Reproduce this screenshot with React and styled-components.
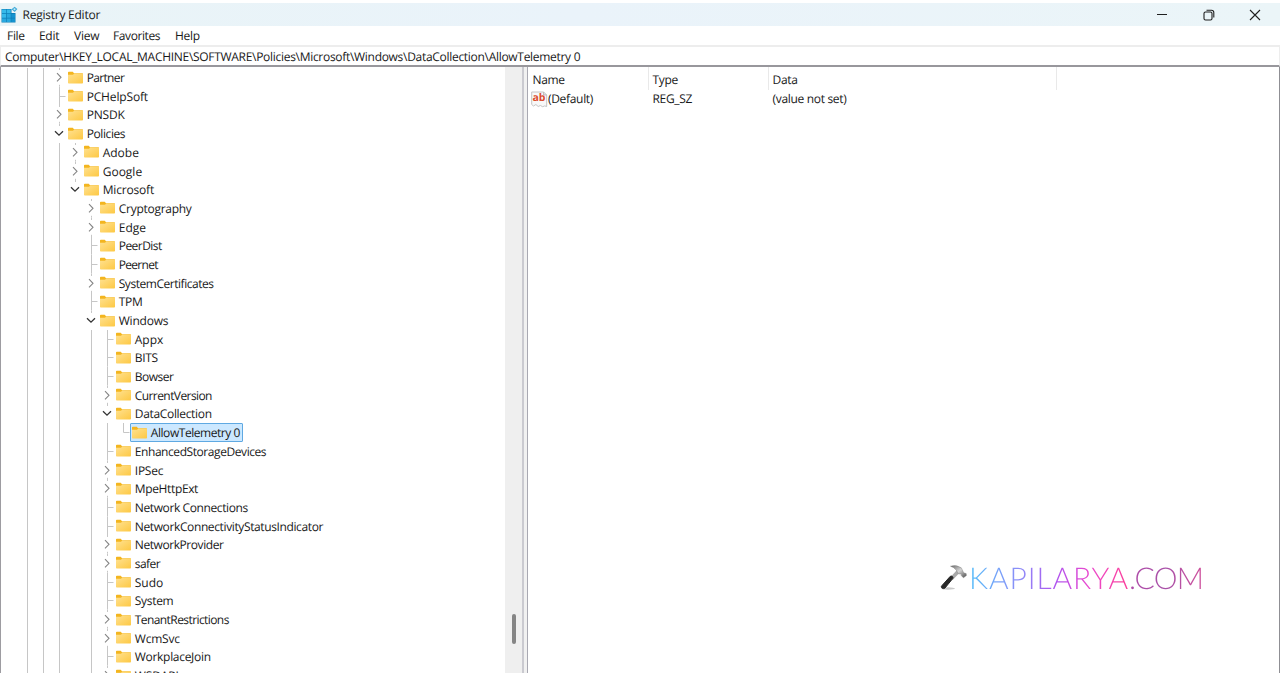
import styled, { createGlobalStyle } from 'styled-components';

const GlobalStyle = createGlobalStyle`
  * {
    box-sizing: border-box;
  }

  body {
    margin: 0;
    overflow: hidden;
    background: #ffffff;
    color: #181818;
    font-family: "Open Sans", "Noto Sans", sans-serif;
    font-size: 12px;
    text-rendering: geometricPrecision;
  }
`;

const Window = styled.div`
  display: flex;
  flex-direction: column;
  height: 673px;
  padding-top: 3px;
  overflow: hidden;
  position: relative;
`;

const TitleBar = styled.header`
  display: flex;
  align-items: center;
  flex: 0 0 23px;
  background: linear-gradient(90deg, #e9f4f7, #eaf3fa 45%, #ebf5f8);
`;

const AppIcon = styled.svg`
  width: 17px;
  height: 17px;
  margin: 0 4.5px 0 1px;
`;

const Title = styled.span`
  flex: 1;
  line-height: 23px;
  letter-spacing: ${(p) => p.$spacing || 0}px;
`;

const WindowButton = styled.button`
  display: flex;
  align-items: center;
  justify-content: center;
  width: 46.5px;
  height: 22px;
  padding: 0 3px 0 0;
  border: 0;
  background: none;
  color: #1f1f1f;
`;

const MenuBar = styled.nav`
  display: flex;
  flex: 0 0 19px;
  min-height: 0;
  padding-left: 7px;
  line-height: 20px;
`;

const MenuItem = styled.span`
  width: ${(p) => p.$width}px;
  white-space: nowrap;
  letter-spacing: ${(p) => p.$spacing || 0}px;
`;

const AddressBar = styled.div`
  flex: 0 0 22px;
  min-height: 0;
  padding-left: 4px;
  border: 1px solid #ededed;
  border-top-width: 2px;
  border-bottom: 2px solid #98979c;
  line-height: 20px;
  white-space: nowrap;
  letter-spacing: ${(p) => p.$spacing || 0}px;
`;

const Panes = styled.main`
  display: flex;
  flex: 1;
  min-height: 0;
`;

const TreePane = styled.section`
  display: flex;
  width: 524px;
  border-left: 1px solid #9d9ca1;
  border-right: 2px solid #cacad0;
`;

const Tree = styled.div`
  flex: 1;
  padding: 1.1px 0 0 18px;
  overflow: hidden;
`;

const TreeRow = styled.div`
  display: flex;
  align-items: stretch;
  height: 18.69px;
`;

const Cell = styled.div`
  display: flex;
  flex: 0 0 16.05px;
  align-items: center;
  justify-content: center;
`;

const Guide = styled(Cell)`
  &::before {
    content: '';
    width: 1px;
    height: 100%;
    background: ${(p) => (p.$blank ? 'transparent' : '#c6c6c6')};
  }
`;

const Branch = styled.svg`
  width: 16px;
  height: 18.69px;
  flex: none;
  overflow: visible;
`;

const Node = styled.div`
  display: flex;
  align-items: center;
  height: 19px;
  margin-left: -1px;
  padding: 0 2px 0 1px;
  border: 1px solid ${(p) => (p.$selected ? '#5fa9e2' : 'transparent')};
  border-radius: 1px;
  background: ${(p) => (p.$selected ? '#cce8ff' : 'transparent')};
`;

const FolderSvg = styled.svg`
  width: 16px;
  height: 14px;
  flex: none;
`;

const Label = styled.span`
  margin-left: 2.5px;
  line-height: 17px;
  white-space: nowrap;
  letter-spacing: ${(p) => p.$spacing || 0}px;
`;

const ScrollTrack = styled.div`
  width: 17px;
  padding: 547px 0 0 7px;
  background: #efefef;
`;

const ScrollThumb = styled.div`
  width: 4px;
  height: 30px;
  border-radius: 2px;
  background: #858585;
`;

const Splitter = styled.div`
  width: 3px;
  background: #f1f1f1;
`;

const ValuesPane = styled.section`
  flex: 1;
  border-left: 1px solid #a9a9b2;
  border-right: 1px solid #8f8f94;
`;

const ValueRow = styled.div`
  display: grid;
  grid-template-columns: 121px 120px 288px 1fr;
  height: ${(p) => (p.$header ? 21 : 20)}px;
  line-height: 20px;
`;

const ValueCell = styled.div`
  display: flex;
  align-items: center;
  padding: ${(p) => (p.$ruled ? 3 : 1)}px 0 0 3.5px;
  border-right: 1px solid ${(p) => (p.$ruled ? '#e9e9e9' : 'transparent')};
  white-space: nowrap;
  letter-spacing: -0.32px;

  &:first-child {
    padding-left: ${(p) => (p.$icon ? 3 : 4.5)}px;
  }
`;

const Watermark = styled.div`
  position: absolute;
  left: 939px;
  top: 561px;
  display: flex;
  align-items: center;
  height: 34px;
`;

const SiteName = styled.span`
  font-family: Lato, sans-serif;
  font-size: 30px;
  font-weight: 300;
  line-height: 34px;
  letter-spacing: ${(p) => p.$spacing}px;
  background: ${(p) => p.$gradient};
  -webkit-background-clip: text;
  background-clip: text;
  color: transparent;
`;

// depth counts the guide columns left of the expander
const KEYS = [
  { name: 'Partner', depth: 2, state: 'closed', spacing: -0.65 },
  { name: 'PCHelpSoft', depth: 2, spacing: -0.15 },
  { name: 'PNSDK', depth: 2, state: 'closed', spacing: -0.15 },
  { name: 'Policies', depth: 2, state: 'open', spacing: -0.4 },
  { name: 'Adobe', depth: 3, state: 'closed' },
  { name: 'Google', depth: 3, state: 'closed' },
  { name: 'Microsoft', depth: 3, state: 'open', spacing: -0.18 },
  { name: 'Cryptography', depth: 4, state: 'closed', spacing: -0.27 },
  { name: 'Edge', depth: 4, state: 'closed' },
  { name: 'PeerDist', depth: 4, spacing: -0.55 },
  { name: 'Peernet', depth: 4, spacing: -0.7 },
  { name: 'SystemCertificates', depth: 4, state: 'closed', spacing: -0.46 },
  { name: 'TPM', depth: 4, spacing: -0.3 },
  { name: 'Windows', depth: 4, state: 'open', spacing: -0.2 },
  { name: 'Appx', depth: 5 },
  { name: 'BITS', depth: 5, spacing: -0.3 },
  { name: 'Bowser', depth: 5, spacing: -0.5 },
  { name: 'CurrentVersion', depth: 5, state: 'closed', spacing: -0.58 },
  { name: 'DataCollection', depth: 5, state: 'open', spacing: -0.33 },
  { name: 'AllowTelemetry 0', depth: 6, selected: true, last: true, spacing: -0.45 },
  { name: 'EnhancedStorageDevices', depth: 5, spacing: -0.43 },
  { name: 'IPSec', depth: 5, state: 'closed', spacing: -0.25 },
  { name: 'MpeHttpExt', depth: 5, state: 'closed', spacing: -0.36 },
  { name: 'Network Connections', depth: 5, spacing: -0.39 },
  { name: 'NetworkConnectivityStatusIndicator', depth: 5, spacing: -0.38 },
  { name: 'NetworkProvider', depth: 5, state: 'closed', spacing: -0.43 },
  { name: 'safer', depth: 5, state: 'closed', spacing: -0.55 },
  { name: 'Sudo', depth: 5 },
  { name: 'System', depth: 5, spacing: -0.3 },
  { name: 'TenantRestrictions', depth: 5, state: 'closed', spacing: -0.58 },
  { name: 'WcmSvc', depth: 5, state: 'closed', spacing: -0.2 },
  { name: 'WorkplaceJoin', depth: 5, spacing: -0.3 },
  { name: 'WSDAPI', depth: 5, state: 'closed', spacing: -0.1 },
];

const MENU = [
  { name: 'File', width: 32, spacing: -0.3 },
  { name: 'Edit', width: 35, spacing: -0.3 },
  { name: 'View', width: 39, spacing: -0.2 },
  { name: 'Favorites', width: 62, spacing: -0.4 },
  { name: 'Help', width: 40, spacing: -0.3 },
];

function Folder() {
  return (
    <FolderSvg viewBox="0 0 16 14">
      <defs>
        <linearGradient id="folder" x1="0" y1="0" x2="1" y2="1">
          <stop offset="0" stopColor="#ffe190" />
          <stop offset="1" stopColor="#fdc843" />
        </linearGradient>
      </defs>
      <path d="M0 1.6Q0 .8.8.8H4.8l1.2 1.4h8.2q.8 0 .8.8v3H0z" fill="#f3b51f" />
      <path d="M0 3.8h5L6.3 2.6H15v9.2q0 .8-.8.8H.8q-.8 0-.8-.8z" fill="url(#folder)" />
    </FolderSvg>
  );
}

function Expander({ state, last }) {
  if (state === 'closed') {
    return (
      <Branch viewBox="0 0 16 18.69">
        <path d="M8.5 0v2M8.5 16.8v1.9" stroke="#c6c6c6" />
        <path d="M6 5.2l4 4.1-4 4.1" fill="none" stroke="#858585" strokeWidth="1.1" />
      </Branch>
    );
  }
  if (state === 'open') {
    return (
      <Branch viewBox="0 0 16 18.69">
        <path d="M8.5 0v2" stroke="#c6c6c6" />
        <path d="M4 7.2l4 4 4-4" fill="none" stroke="#333333" strokeWidth="1.3" />
      </Branch>
    );
  }
  return (
    <Branch viewBox="0 0 16 18.69">
      <path d={last ? 'M8.5 0v9.5h6' : 'M8.5 0v18.69M8.5 9.5h6'} fill="none" stroke="#c6c6c6" />
    </Branch>
  );
}

function RegistryIcon() {
  return (
    <AppIcon viewBox="0 0 17 17">
      <path d="M.5 3h10v4h4v9.5H.5z" fill="#0d7fb8" />
      <g fill="#35b9ea">
        <path d="M1 3.5h4v3.7H1zM5.7 3.5h4v3.7h-4zM1 8h4v3.7H1z" />
        <path d="M5.7 8h4v3.7h-4zM1 12.4h4V16H1zM5.7 12.4h4V16h-4z" fill="#28a8df" />
        <path d="M10.4 8H14v3.7h-3.6zM10.4 12.4H14V16h-3.6z" fill="#1593cf" />
      </g>
      <path d="M10.5 3.3L13.6.8 16.4 3l-2.7 3z" fill="#3fa9d8" />
      <circle cx="13.5" cy="3.3" r="1" fill="#c5ecfa" />
    </AppIcon>
  );
}

function StringIcon() {
  return (
    <svg width="17" height="17" viewBox="0 0 17 17">
      <path d="M.7 1h12l3 3v11.5l-2-.6-2 .8-2.3-1.2-2.2 1-2.3-2L2.5 15l-1.8-1.5z" fill="#f8f8f8" stroke="#c4c4c4" />
      <path d="M12.5 1v3h3" fill="#dedede" stroke="#b0b0b0" strokeWidth=".7" />
      <text x="1.5" y="10" fill="#dc4a2b" fontFamily="Open Sans, sans-serif" fontSize="10.5" fontWeight="700" letterSpacing="0">ab</text>
    </svg>
  );
}

function Hammer() {
  return (
    <svg width="30" height="32" viewBox="0 0 30 32">
      <defs>
        <linearGradient id="steel" x1="0" y1="0" x2="1" y2="1">
          <stop offset="0" stopColor="#666666" />
          <stop offset=".5" stopColor="#d5d5d5" />
          <stop offset="1" stopColor="#4a4a4a" />
        </linearGradient>
      </defs>
      <ellipse cx="9" cy="26.5" rx="7" ry="1.2" fill="#c9c9c9" />
      <path d="M11 15.5L18.5 7.5l3 2.2-7.8 8.4z" fill="#a9a9a9" />
      <path d="M3 23.5L11.3 14.3q1.2-.6 2.2.3.9 1 .2 2L6 26q-1.5 1.2-3 0t0-2.5z" fill="#282828" stroke="#282828" />
      <path d="M11.5 4.2Q17 2 22.3 5.8l2.4 5 2.5.8.2 2-3 2.2-2.2-2.4.4-1.2-3.3-.4-2-3.6Q15 5.2 11.5 4.2z" fill="url(#steel)" stroke="#777777" strokeWidth=".4" />
    </svg>
  );
}

export default function App() {
  return (
    <>
      <GlobalStyle />
      <Window>
        <TitleBar>
          <RegistryIcon />
          <Title $spacing={-0.24}>Registry Editor</Title>
          <WindowButton aria-label="Minimize">
            <svg width="12" height="12" viewBox="0 0 12 12">
              <path d="M1 5.5h10" stroke="currentColor" />
            </svg>
          </WindowButton>
          <WindowButton aria-label="Restore">
            <svg width="12" height="12" viewBox="0 0 12 12" fill="none" stroke="currentColor" strokeWidth="1.1">
              <rect x="1" y="3" width="8" height="8" rx="1.5" />
              <path d="M3.5 1.2h5q2.3 0 2.3 2.3v5" />
            </svg>
          </WindowButton>
          <WindowButton aria-label="Close">
            <svg width="12" height="12" viewBox="0 0 12 12">
              <path d="M1 1l10 10M11 1L1 11" stroke="currentColor" strokeWidth="1.1" />
            </svg>
          </WindowButton>
        </TitleBar>

        <MenuBar>
          {MENU.map((item) => (
            <MenuItem key={item.name} $width={item.width} $spacing={item.spacing}>{item.name}</MenuItem>
          ))}
        </MenuBar>

        <AddressBar $spacing={-0.295}>
          Computer\HKEY_LOCAL_MACHINE\SOFTWARE\Policies\Microsoft\Windows\DataCollection\AllowTelemetry 0
        </AddressBar>

        <Panes>
          <TreePane>
            <Tree>
              {KEYS.map((item) => (
                <TreeRow key={item.name}>
                  {Array.from({ length: item.depth }, (_, i) => (
                    // Microsoft is the last key under Policies, so its column stays empty
                    <Guide key={i} $blank={i === 3} />
                  ))}
                  <Cell>
                    <Expander state={item.state} last={item.last} />
                  </Cell>
                  <Node $selected={item.selected}>
                    <Folder />
                    <Label $spacing={item.spacing}>{item.name}</Label>
                  </Node>
                </TreeRow>
              ))}
            </Tree>
            <ScrollTrack>
              <ScrollThumb />
            </ScrollTrack>
          </TreePane>
          <Splitter />
          <ValuesPane>
            <ValueRow $header>
              <ValueCell $ruled>Name</ValueCell>
              <ValueCell $ruled>Type</ValueCell>
              <ValueCell $ruled>Data</ValueCell>
            </ValueRow>
            <ValueRow>
              <ValueCell $icon>
                <StringIcon />
                (Default)
              </ValueCell>
              <ValueCell>REG_SZ</ValueCell>
              <ValueCell>(value not set)</ValueCell>
            </ValueRow>
          </ValuesPane>
        </Panes>

        <Watermark>
          <Hammer />
          <SiteName $spacing={0.9} $gradient="linear-gradient(90deg, #55bdf9, #8e8cf8 32%, #b052ee 55%, #ea48ce 75%, #fb3f98)">
            KAPILARYA
          </SiteName>
          <SiteName $spacing={-0.7} $gradient="linear-gradient(90deg, #b04aa8, #a851a8 50%, #cf4f9b)">
            .COM
          </SiteName>
        </Watermark>
      </Window>
    </>
  );
}
